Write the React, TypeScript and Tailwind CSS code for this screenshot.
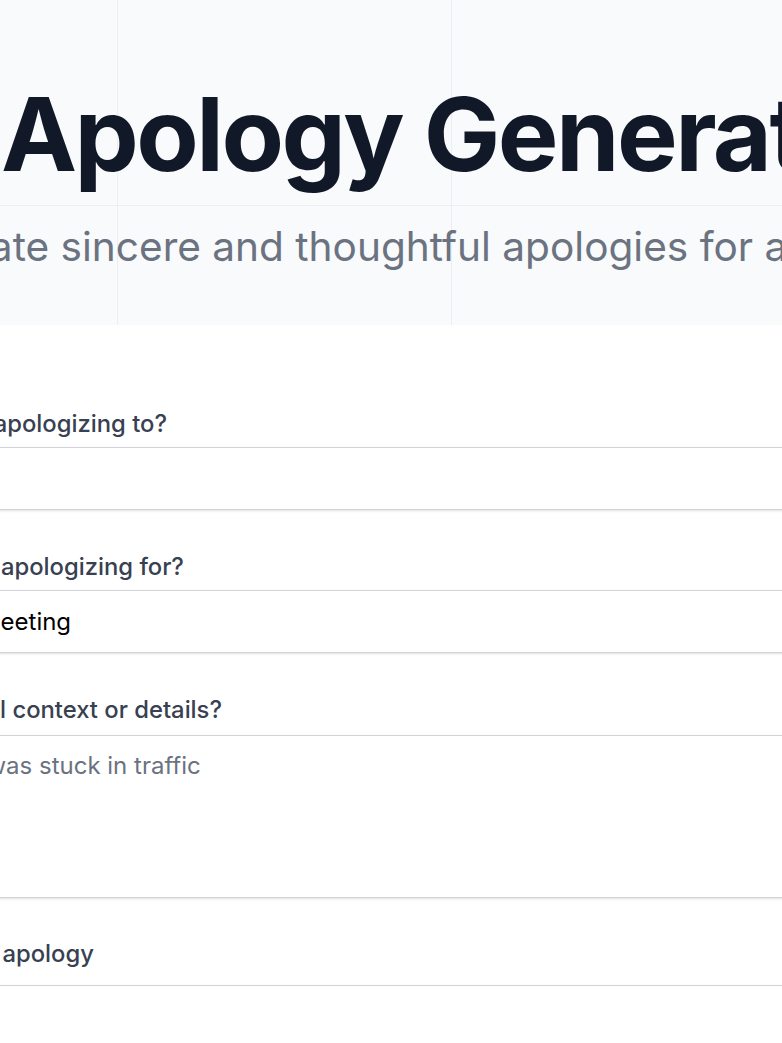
import React, { useState } from 'react';

const fieldClass =
    'block w-[1400px] rounded-xl border border-[#d1d5db] bg-white px-5 text-[24px] leading-[34px] text-black shadow-sm placeholder:text-[#6b7280] outline-none';

const labelClass = 'block whitespace-nowrap text-[23.8px] font-medium leading-[34px] text-[#374151]';

export default function App() {
    const [recipient, setRecipient] = useState('');
    const [reason, setReason] = useState('Missing a meeting');
    const [context, setContext] = useState('');
    const [tone, setTone] = useState('');

    return (
        <div className="w-[782px] h-[1043px] overflow-hidden bg-white font-['Inter',sans-serif]">
            <header className="h-[325px] bg-[#f9fafb] bg-[linear-gradient(to_right,#eceef1_1px,transparent_1px),linear-gradient(to_bottom,#eceef1_1px,transparent_1px)] bg-[size:334px_334px] bg-[position:117px_205px] pt-[83px]">
                <h1 className="ml-[1px] whitespace-nowrap text-[102px] font-bold leading-none tracking-[-0.025em] text-[#111827]">
                    Apology Generator
                </h1>
                <p className="-ml-[127px] mt-[38px] whitespace-nowrap text-[40.6px] leading-[48px] text-[#6b7280]">
                    Generate sincere and thoughtful apologies for any situation
                </p>
            </header>

            <form className="-ml-[156px] pt-[82px]" onSubmit={(e) => e.preventDefault()}>
                <div>
                    <label className={`${labelClass} mb-[6px]`}>Who are you apologizing to?</label>
                    <input
                        type="text"
                        value={recipient}
                        onChange={(e) => setRecipient(e.target.value)}
                        className={`${fieldClass} h-[63px]`}
                    />
                </div>

                <div className="mt-[40px]">
                    <label className={`${labelClass} mb-[6px]`}>What are you apologizing for?</label>
                    <input
                        type="text"
                        value={reason}
                        onChange={(e) => setReason(e.target.value)}
                        className={`${fieldClass} h-[63px]`}
                    />
                </div>

                <div className="mt-[40px]">
                    <label className={`${labelClass} mb-[8px]`}>Any additional context or details?</label>
                    <textarea
                        value={context}
                        onChange={(e) => setContext(e.target.value)}
                        placeholder="Optional: I was stuck in traffic"
                        className={`${fieldClass} h-[163px] resize-none py-[13px]`}
                    />
                </div>

                <div className="mt-[39px]">
                    <label className={`${labelClass} mb-[14px]`}>Tone for your apology</label>
                    <select
                        value={tone}
                        onChange={(e) => setTone(e.target.value)}
                        className={`${fieldClass} h-[63px] appearance-none`}
                    >
                        <option value=""></option>
                        <option value="sincere">Sincere and heartfelt</option>
                        <option value="professional">Professional</option>
                        <option value="casual">Casual</option>
                    </select>
                </div>
            </form>
        </div>
    );
}
